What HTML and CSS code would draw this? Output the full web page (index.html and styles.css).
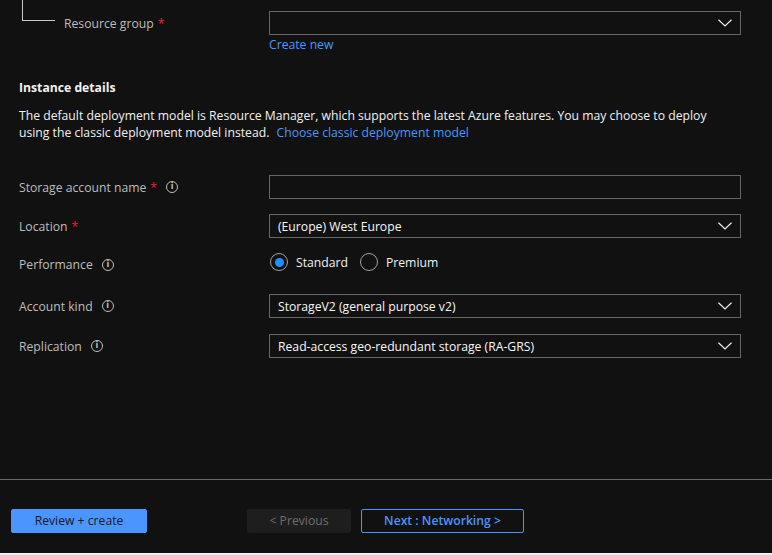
FILE: index.html
```html
<!DOCTYPE html>
<html lang="en">
<head>
<meta charset="utf-8">
<title>Create storage account</title>
<link rel="stylesheet" href="styles.css">
</head>
<body>
<div class="page">
  <main class="form">
    <div class="rg-row">
      <div class="tree"><span class="tree-line"></span></div>
      <div class="rg-label"><span>Resource group</span><span class="req">*</span></div>
      <div class="rg-control">
        <div class="select"><span class="value"></span><svg class="chev" viewBox="0 0 14 8" width="14" height="8"><path d="M0.5 0.8 L7 7 L13.5 0.8" fill="none" stroke="#f0f0f0" stroke-width="1.2"/></svg></div>
        <a class="link create-new" href="#">Create new</a>
      </div>
    </div>

    <h2 class="section-title">Instance details</h2>
    <p class="intro">The default deployment model is Resource Manager, which supports the latest Azure features. You may choose to deploy using the classic deployment model instead. <a class="link classic" href="#">Choose classic deployment model</a></p>

    <div class="fields">
      <div class="field f-name">
        <div class="label"><span>Storage account name</span><span class="req">*</span><span class="info">i</span></div>
        <div class="input"></div>
      </div>
      <div class="field f-location">
        <div class="label"><span>Location</span><span class="req">*</span></div>
        <div class="select"><span class="value">(Europe) West Europe</span><svg class="chev" viewBox="0 0 14 8" width="14" height="8"><path d="M0.5 0.8 L7 7 L13.5 0.8" fill="none" stroke="#f0f0f0" stroke-width="1.2"/></svg></div>
      </div>
      <div class="field f-perf">
        <div class="label"><span>Performance</span><span class="info">i</span></div>
        <div class="radios">
          <label class="radio"><span class="dot on"></span>Standard</label>
          <label class="radio"><span class="dot"></span>Premium</label>
        </div>
      </div>
      <div class="field f-kind">
        <div class="label"><span>Account kind</span><span class="info">i</span></div>
        <div class="select"><span class="value">StorageV2 (general purpose v2)</span><svg class="chev" viewBox="0 0 14 8" width="14" height="8"><path d="M0.5 0.8 L7 7 L13.5 0.8" fill="none" stroke="#f0f0f0" stroke-width="1.2"/></svg></div>
      </div>
      <div class="field f-repl">
        <div class="label"><span>Replication</span><span class="info">i</span></div>
        <div class="select"><span class="value">Read-access geo-redundant storage (RA-GRS)</span><svg class="chev" viewBox="0 0 14 8" width="14" height="8"><path d="M0.5 0.8 L7 7 L13.5 0.8" fill="none" stroke="#f0f0f0" stroke-width="1.2"/></svg></div>
      </div>
    </div>
  </main>

  <footer class="footer">
    <button class="btn primary">Review + create</button>
    <button class="btn disabled">&lt; Previous</button>
    <button class="btn outline">Next : Networking &gt;</button>
  </footer>
</div>
</body>
</html>
```

FILE: styles.css
```css
html {
  background: #f0f0f0;
}
body {
  margin: 0;
  font-family: "Open Sans", "Noto Sans", sans-serif;
  font-size: 12.2px;
  color: #f2f2f2;
}
.page {
  height: 553px;
  background: #111111;
  display: flex;
  flex-direction: column;
  overflow: hidden;
}
.form {
  flex: 1;
  padding-left: 19px;
}
.req {
  color: #e8202f;
  margin-left: 4px;
}
.link {
  color: #4898ff;
  text-decoration: none;
}
.classic {
  display: inline-block;
  margin-left: 4px;
  line-height: 17px;
}

/* resource group row */
.rg-row {
  display: flex;
  margin-left: -19px;
}
.tree {
  width: 64px;
  flex: none;
}
.tree-line {
  display: block;
  margin-left: 22px;
  width: 33px;
  height: 21px;
  border-left: 1px solid #c8c8c8;
  border-bottom: 1px solid #c8c8c8;
  box-sizing: border-box;
}
.rg-label {
  width: 205px;
  padding-top: 15px;
  color: #bdbdbd;
  line-height: 17px;
  display: flex;
  align-items: flex-start;
}
.rg-control {
  width: 472px;
  padding-top: 11px;
}
.create-new {
  display: block;
  line-height: 17px;
  margin-top: 1px;
}

/* section */
.section-title {
  margin: 26px 0 0;
  font-size: 12.2px;
  font-weight: 700;
  line-height: 17px;
  color: #f2f2f2;
}
.intro {
  margin: 11px 0 0;
  width: 705px;
  line-height: 17px;
}

/* fields */
.fields {
  margin-top: 34px;
  display: flex;
  flex-direction: column;
}
.field {
  display: grid;
  grid-template-columns: 250px 472px;
  align-items: center;
  height: 24px;
}
.f-location { margin-top: 15px; }
.f-perf { margin-top: 12px; }
.f-kind { margin-top: 20px; }
.f-repl { margin-top: 16px; }
.label {
  color: #bdbdbd;
  line-height: 17px;
  display: flex;
  align-items: center;
}
.f-perf .label {
  padding-top: 5px;
}
.info {
  box-sizing: border-box;
  width: 12px;
  height: 12px;
  border: 1px solid #bdbdbd;
  border-radius: 50%;
  margin-left: 9px;
  font-size: 8px;
  line-height: 10px;
  text-align: center;
  font-weight: 700;
  color: #bdbdbd;
  font-family: "DejaVu Sans", sans-serif;
}
.input,
.select {
  box-sizing: border-box;
  height: 24px;
  border: 1px solid #666666;
  background: #111111;
  display: flex;
  align-items: center;
  justify-content: space-between;
  padding: 0 8px 0 8px;
  color: #f8f8f8;
}
.chev {
  flex: none;
}
.radios {
  display: flex;
  align-items: center;
  gap: 11px;
}
.radio {
  display: flex;
  align-items: center;
  gap: 8px;
  color: #f2f2f2;
}
.dot {
  box-sizing: border-box;
  width: 18px;
  height: 18px;
  border-radius: 50%;
  border: 1px solid #a0a0a0;
  margin-left: 1px;
  display: flex;
  align-items: center;
  justify-content: center;
}
.dot.on::after {
  content: "";
  width: 9px;
  height: 9px;
  border-radius: 50%;
  background: #1f8fff;
}

/* footer */
.footer {
  height: 74px;
  border-top: 1px solid #6a6a6a;
  display: flex;
  align-items: flex-start;
  padding: 29px 0 0 11px;
  box-sizing: border-box;
  flex: none;
}
.btn {
  height: 24px;
  box-sizing: border-box;
  font-family: inherit;
  font-size: 12.2px;
  line-height: 20px;
  border-radius: 2px;
  padding: 0 0 1px;
  cursor: pointer;
}
.primary {
  width: 136px;
  background: #4a95ff;
  border: 1px solid #4a95ff;
  color: #1a1a1a;
}
.disabled {
  width: 104px;
  margin-left: 100px;
  background: #1e1e1e;
  border: 1px solid #1e1e1e;
  color: #6e6e6e;
}
.outline {
  width: 163px;
  margin-left: 10px;
  background: #111111;
  border: 1px solid #4a95ff;
  color: #4a95ff;
  font-weight: 600;
}
```
